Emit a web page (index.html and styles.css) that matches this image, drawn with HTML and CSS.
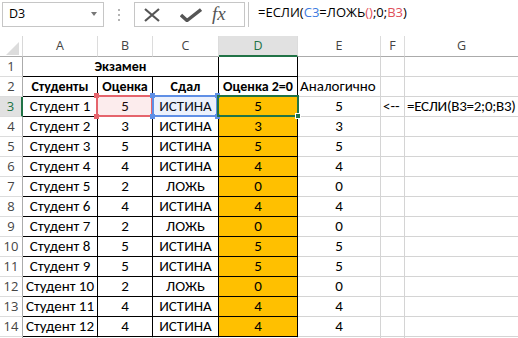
FILE: index.html
```html
<!DOCTYPE html>
<html lang="ru">
<head>
<meta charset="utf-8">
<link rel="stylesheet" href="styles.css">
</head>
<body>
<div class="app">
  <div class="toolbar">
    <div class="namebox"><span class="nb-text">D3</span><span class="caret"></span></div>
    <div class="dots"><i></i><i></i><i></i></div>
    <div class="fbtns">
      <svg class="ic-x" width="18" height="14" viewBox="0 0 18 14"><path d="M2 1 L16 13 M16 1 L2 13" stroke="#555" stroke-width="2.2" fill="none"/></svg>
      <svg class="ic-ok" width="22" height="14" viewBox="0 0 22 14"><path d="M1 7 L7 12.5 L21 1.5" stroke="#555" stroke-width="3.4" fill="none" stroke-linejoin="miter"/></svg>
      <span class="fx">fx</span>
    </div>
    <div class="formula">=ЕСЛИ(<span class="c-blue">C3</span>=ЛОЖЬ<span class="c-red">()</span>;0;<span class="c-red">B3</span>)</div>
  </div>

  <div class="sheet">
    <div class="grid">
      <div class="corner"><svg width="16" height="16" viewBox="0 0 16 16"><polygon points="15,2 15,15 2,15" fill="#dcdcdc"/></svg></div>
      <div class="ch">A</div><div class="ch">B</div><div class="ch">C</div><div class="ch ch-sel">D</div><div class="ch">E</div><div class="ch">F</div><div class="ch">G</div>

      <div class="rh">1</div><div class="c b bold span3">Экзамен</div><div class="c b"></div><div class="c"></div><div class="c"></div><div class="c"></div>
      <div class="rh">2</div><div class="c b bold">Студенты</div><div class="c b bold">Оценка</div><div class="c b bold">Сдал</div><div class="c b bold">Оценка 2=0</div><div class="c l">Аналогично</div><div class="c"></div><div class="c"></div>
      <div class="rh rh-sel">3</div><div class="c b">Студент 1</div><div class="c b">5</div><div class="c b">ИСТИНА</div><div class="c b o">5</div><div class="c">5</div><div class="c l">&lt;--</div><div class="c l ov">=ЕСЛИ(B3=2;0;B3)</div>
      <div class="rh">4</div><div class="c b">Студент 2</div><div class="c b">3</div><div class="c b">ИСТИНА</div><div class="c b o">3</div><div class="c">3</div><div class="c"></div><div class="c"></div>
      <div class="rh">5</div><div class="c b">Студент 3</div><div class="c b">5</div><div class="c b">ИСТИНА</div><div class="c b o">5</div><div class="c">5</div><div class="c"></div><div class="c"></div>
      <div class="rh">6</div><div class="c b">Студент 4</div><div class="c b">4</div><div class="c b">ИСТИНА</div><div class="c b o">4</div><div class="c">4</div><div class="c"></div><div class="c"></div>
      <div class="rh">7</div><div class="c b">Студент 5</div><div class="c b">2</div><div class="c b">ЛОЖЬ</div><div class="c b o">0</div><div class="c">0</div><div class="c"></div><div class="c"></div>
      <div class="rh">8</div><div class="c b">Студент 6</div><div class="c b">4</div><div class="c b">ИСТИНА</div><div class="c b o">4</div><div class="c">4</div><div class="c"></div><div class="c"></div>
      <div class="rh">9</div><div class="c b">Студент 7</div><div class="c b">2</div><div class="c b">ЛОЖЬ</div><div class="c b o">0</div><div class="c">0</div><div class="c"></div><div class="c"></div>
      <div class="rh">10</div><div class="c b">Студент 8</div><div class="c b">5</div><div class="c b">ИСТИНА</div><div class="c b o">5</div><div class="c">5</div><div class="c"></div><div class="c"></div>
      <div class="rh">11</div><div class="c b">Студент 9</div><div class="c b">5</div><div class="c b">ИСТИНА</div><div class="c b o">5</div><div class="c">5</div><div class="c"></div><div class="c"></div>
      <div class="rh">12</div><div class="c b">Студент 10</div><div class="c b">2</div><div class="c b">ЛОЖЬ</div><div class="c b o">0</div><div class="c">0</div><div class="c"></div><div class="c"></div>
      <div class="rh">13</div><div class="c b">Студент 11</div><div class="c b">4</div><div class="c b">ИСТИНА</div><div class="c b o">4</div><div class="c">4</div><div class="c"></div><div class="c"></div>
      <div class="rh">14</div><div class="c b">Студент 12</div><div class="c b">4</div><div class="c b">ИСТИНА</div><div class="c b o">4</div><div class="c">4</div><div class="c"></div><div class="c"></div>
      <div class="rh"></div><div class="c"></div><div class="c"></div><div class="c"></div><div class="c"></div><div class="c"></div><div class="c"></div><div class="c"></div>
    </div>

    <div class="ref ref-red"><i class="k tl"></i><i class="k tr"></i><i class="k bl"></i><i class="k br"></i></div>
    <div class="ref ref-blue"><i class="k tl"></i><i class="k tr"></i><i class="k bl"></i><i class="k br"></i></div>
    <div class="active"><i class="handle"></i></div>
  </div>
</div>
</body>
</html>
```

FILE: styles.css
```css
* { box-sizing: border-box; }
html, body { margin: 0; padding: 0; background: #fff; }
body { width: 518px; height: 338px; overflow: hidden; }

.app { width: 518px; height: 338px; overflow: hidden; }

/* ---------- toolbar ---------- */
.toolbar {
  height: 36px;
  display: flex;
  align-items: flex-start;
  padding: 2px 0 0 2px;
  font-family: "Open Sans", "Noto Sans", sans-serif;
  font-size: 13px;
  color: #000;
}
.namebox {
  width: 102px;
  height: 25px;
  border: 1px solid #c6c6c6;
  display: flex;
  align-items: center;
  justify-content: space-between;
  padding: 0 6px 0 6px;
  font-size: 12.5px;
}
.nb-text { line-height: 1; }
.caret {
  width: 0; height: 0;
  border-left: 3.5px solid transparent;
  border-right: 3.5px solid transparent;
  border-top: 4px solid #777;
  margin-top: -1px;
}
.dots {
  margin-left: 14px;
  width: 3px;
  height: 25px;
  display: flex;
  flex-direction: column;
  justify-content: center;
  gap: 3px;
}
.dots i { display: block; width: 2px; height: 2px; background: #b4b4b4; }
.fbtns {
  margin-left: 13px;
  width: 111px;
  height: 25px;
  border: 1px solid #c6c6c6;
  display: flex;
  align-items: center;
  padding-left: 8px;
}
.ic-x { margin-right: 19px; }
.ic-ok { margin-right: 10px; }
.fx {
  font-family: "Liberation Serif", "DejaVu Serif", serif;
  font-style: italic;
  font-size: 19px;
  color: #555;
  line-height: 1;
  margin-top: -3px;
}
.formula {
  margin-left: 3px;
  flex: 1;
  height: 25px;
  border-left: 1px solid #c6c6c6;
  padding-left: 9px;
  line-height: 21px;
  white-space: nowrap;
}
.c-blue { color: #3d7be0; }
.c-red { color: #e0505a; }

/* ---------- sheet ---------- */
.sheet { position: relative; height: 302px; overflow: hidden; }
.grid {
  display: grid;
  grid-template-columns: 23px 75px 55px 66px 79px 83px 24px 114px;
  grid-template-rows: 21px repeat(15, 20px);
  font-family: Carlito, Lato, "Open Sans", sans-serif;
  font-size: 15px;
  color: #000;
}
.corner {
  border-right: 1px solid #d8d8d8;
  border-bottom: 1px solid #ababab;
  display: flex;
  align-items: flex-end;
  justify-content: flex-end;
  padding: 0 2px 0 0;
}
.ch {
  border-right: 1px solid #dcdcdc;
  border-bottom: 1px solid #ababab;
  font-family: "Open Sans", "Noto Sans", sans-serif;
  font-size: 12.5px;
  color: #444;
  text-align: center;
  line-height: 20px;
}
.ch-sel {
  background: #e1e1e1;
  color: #217346;
  border-bottom: 2px solid #217346;
}
.rh {
  border-right: 1px solid #ababab;
  border-bottom: 1px solid #dcdcdc;
  font-family: "Open Sans", "Noto Sans", sans-serif;
  font-size: 13px;
  color: #444;
  text-align: center;
  line-height: 19px;
}
.rh-sel {
  background: #e1e1e1;
  color: #217346;
  border-right: 2px solid #217346;
}
.c {
  border-right: 1px solid #d4d4d4;
  border-bottom: 1px solid #d4d4d4;
  text-align: center;
  line-height: 19px;
  white-space: nowrap;
  padding: 0 2px;
}
.c.b { border-right-color: #000; border-bottom-color: #000; }
.c.bold { font-weight: 700; font-size: 14px; }
.c.o { background: #ffc000; }
.c.l { text-align: left; }
.c.ov { overflow: visible; letter-spacing: -0.25px; }
.span3 { grid-column: span 3; }

/* ---------- overlays ---------- */
.ref { position: absolute; top: 59px; height: 22px; border: 2px solid; }
.ref-red { left: 96px; width: 57px; border-color: #e5646c; background: rgba(229, 100, 108, 0.12); }
.ref-blue { left: 152px; width: 66px; border-color: #5f8fe6; background: rgba(95, 143, 230, 0.12); }
.k { position: absolute; width: 5px; height: 5px; }
.ref-red .k { background: #e5646c; }
.ref-blue .k { background: #5f8fe6; }
.k.tl { left: -4px; top: -4px; }
.k.tr { right: -4px; top: -4px; }
.k.bl { left: -4px; bottom: -4px; }
.k.br { right: -4px; bottom: -4px; }
.active {
  position: absolute;
  left: 217px; top: 59px;
  width: 82px; height: 22px;
  border: 2px solid #217346;
}
.handle {
  position: absolute;
  right: -4px; bottom: -4px;
  width: 6px; height: 6px;
  background: #217346;
  border: 1px solid #fff;
}
```
